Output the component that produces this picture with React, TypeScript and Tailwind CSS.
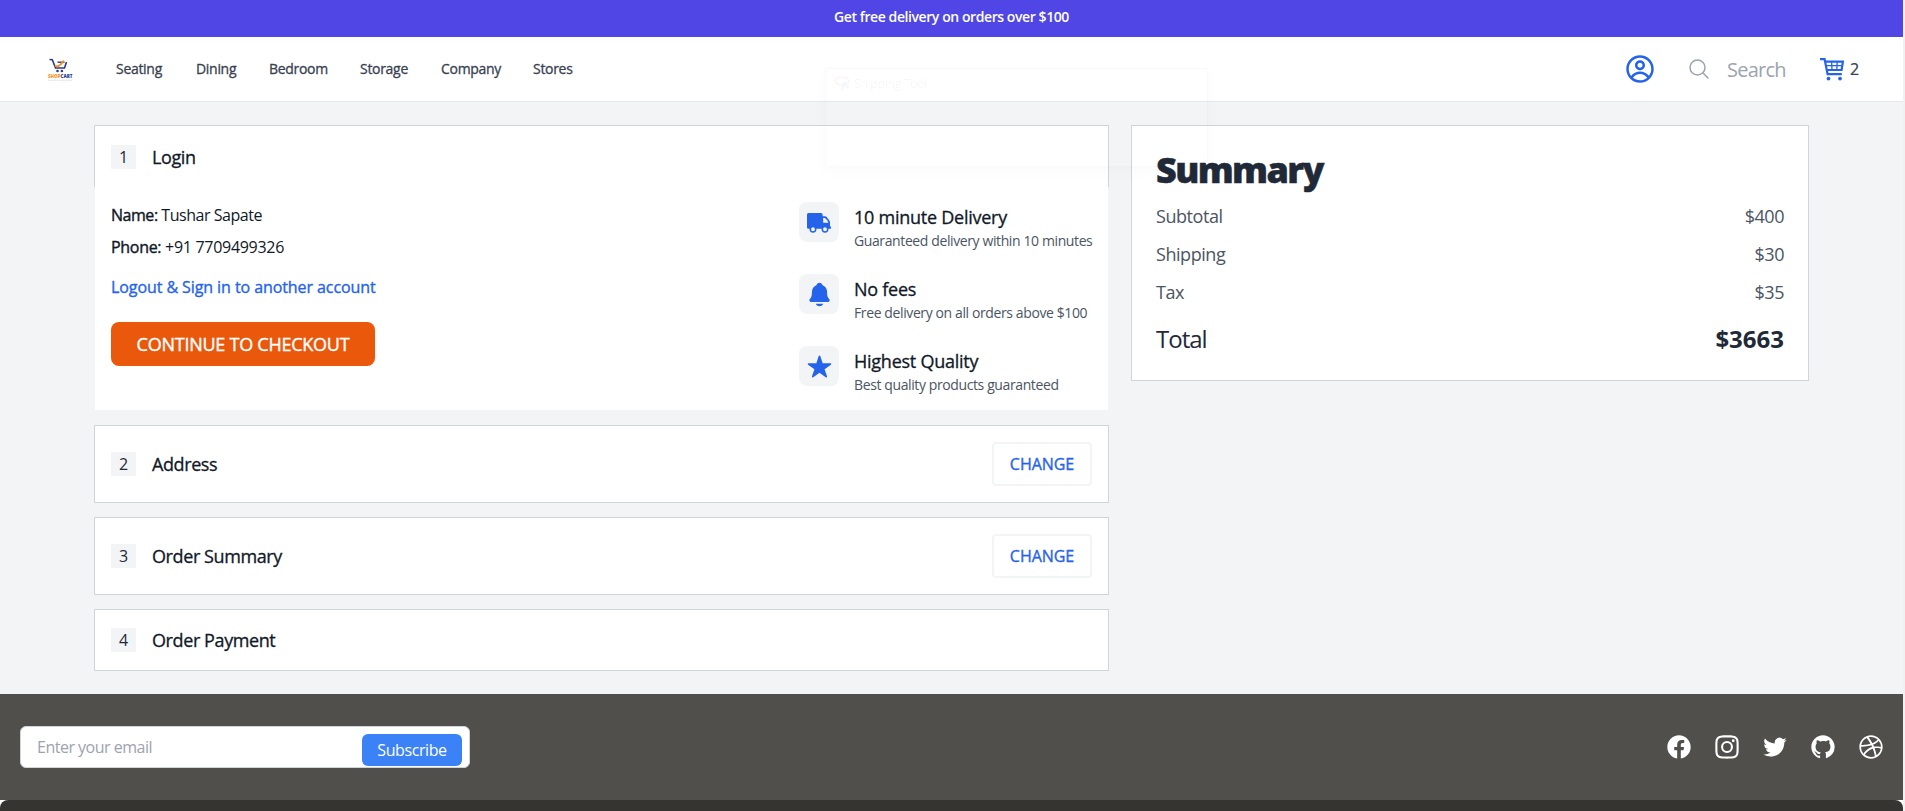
import { CgProfile } from "react-icons/cg";
import { HiOutlineMagnifyingGlass } from "react-icons/hi2";
import { IoNotifications } from "react-icons/io5";
import { IoIosStar } from "react-icons/io";

const links = [
    { name: "Seating", style: "w-[48px]" },
    { name: "Dining", style: "w-[41px]" },
    { name: "Bedroom", style: "w-[59px]" },
    { name: "Storage", style: "w-[49px]" },
    { name: "Company", style: "w-[60px]" },
    { name: "Stores", style: "w-[40px]" },
];

function Logo() {
    return (
        <svg className="h-[26px] w-[28px] overflow-visible" viewBox="0 0 28 26">
            <path d="M3.5 3.5 L6.3 3.8 L9.5 12 L18.5 12 L20.5 6" fill="none" stroke="#2b3a8c" strokeWidth="1.6" />
            <path d="M11.5 6.2 L18.5 6.2" stroke="#2b3a8c" strokeWidth="1.4" />
            <path d="M8.8 9.5 C12 11.5 15 9 17.8 4.5" fill="none" stroke="#f7931e" strokeWidth="1.9" />
            <circle cx="11.5" cy="15" r="1.3" fill="#2b3a8c" />
            <circle cx="15.9" cy="15" r="1.3" fill="#2b3a8c" />
            <text x="2" y="22" fontSize="5" fontWeight="800" textLength="24.5" lengthAdjust="spacingAndGlyphs">
                <tspan fill="#f7931e">SHOP</tspan><tspan fill="#2b3a8c">CART</tspan>
            </text>
            <path d="M2.5 24.2 H26" stroke="#d9d9df" strokeWidth="0.9" strokeDasharray="2 0.7" />
        </svg>
    );
}

function CartIcon() {
    return (
        <svg className="ml-[33px] h-[23px] w-[24px]" viewBox="0 0 24 23" fill="none" stroke="#2563eb">
            <path d="M0 1.2 H4.6 L7.6 16.2 H21.8" strokeWidth="2.2" />
            <path d="M5 3.6 H22.9 L21.6 12 H7" strokeWidth="2.2" />
            <path d="M6.2 7.7 H22 M11.6 3.5 L12 12 M17.2 3.5 L16.8 12" strokeWidth="1.3" />
            <circle cx="8.5" cy="20.6" r="1.9" fill="#2563eb" stroke="none" />
            <circle cx="20" cy="20.6" r="1.9" fill="#2563eb" stroke="none" />
        </svg>
    );
}

function TruckIcon() {
    return (
        <svg className="mt-px h-5 w-6" viewBox="0 0 24 20">
            <path d="M1.5 0 H14 Q15.6 0 15.6 1.6 V3.2 H18 Q19 3.2 19.7 4 L22.3 7.4 Q23 8.3 23 9.5 V13.5 H24 V15.8 H1.5 Q0 15.8 0 14.3 V1.5 Q0 0 1.5 0 Z" fill="#2563eb" />
            <path d="M16.2 4.9 H17.8 Q20.6 6.2 21.4 9.8 H16.2 Z" fill="#f3f4f6" />
            <circle cx="6" cy="16.2" r="2.7" fill="#f3f4f6" stroke="#2563eb" strokeWidth="1.5" />
            <circle cx="18" cy="16.2" r="2.7" fill="#f3f4f6" stroke="#2563eb" strokeWidth="1.5" />
        </svg>
    );
}

function Navbar() {
    return (
        <header>
            <div className="flex h-[37px] items-start justify-center bg-[#4f46e5] pt-[7px]">
                <p className="text-sm font-semibold tracking-[-0.42px] text-white">Get free delivery on orders over $100</p>
            </div>
            <nav className="flex h-[65px] items-center border-b border-[#e5e7eb] bg-white pl-[46px] pr-[44px]">
                <Logo />
                <div className="ml-[42px] flex gap-8">
                    {links.map((link) => (
                        <a key={link.name} className={`${link.style} whitespace-nowrap text-sm font-medium tracking-[-0.3px] text-[#374151] [-webkit-text-stroke:0.3px]`}>{link.name}</a>
                    ))}
                </div>
                <div className="ml-auto flex items-center">
                    <CgProfile className="h-[30px] w-[30px] text-[#2563eb]" />
                    <HiOutlineMagnifyingGlass className="ml-8 h-6 w-6 text-[#9ca3af]" />
                    <span className="ml-[16px] w-[60px] pt-px text-xl tracking-[-0.75px] text-[#9ca3af]">Search</span>
                    <CartIcon />
                    <span className="ml-[6px] w-[9px] text-base font-medium text-[#374151] [-webkit-text-stroke:0.2px]">2</span>
                </div>
            </nav>
        </header>
    );
}

function StepTitle({ step, title }: { step: number; title: string }) {
    return (
        <div className="flex items-center gap-4">
            <span className="flex h-6 w-[25px] items-center justify-center bg-[#f3f4f6] text-base text-[#1f2937]">{step}</span>
            <h2 className="text-lg font-medium tracking-[-0.4px] text-[#111827] [-webkit-text-stroke:0.3px]">{title}</h2>
        </div>
    );
}

function ChangeButton() {
    return (
        <button className="h-11 w-[100px] rounded border-2 border-[#f3f4f6] text-base font-medium tracking-[-0.05px] text-[#2563eb] [-webkit-text-stroke:0.35px]">CHANGE</button>
    );
}

function Feature({ icon, title, text }: { icon: React.ReactNode; title: string; text: string }) {
    return (
        <div className="flex gap-[15px]">
            <div className="flex h-10 w-10 items-center justify-center rounded-lg bg-[#f3f4f6] text-[#2563eb]">{icon}</div>
            <div className="w-[238px] whitespace-nowrap pt-px">
                <h3 className="text-lg leading-7 font-medium tracking-[-0.25px] text-[#111827] [-webkit-text-stroke:0.3px]">{title}</h3>
                <p className="text-sm leading-5 tracking-[-0.39px] text-[#4b5563]">{text}</p>
            </div>
        </div>
    );
}

function Login() {
    return (
        <section>
            <div className="flex h-[62px] items-center border border-b-0 border-[#d1d5db] bg-white px-4">
                <StepTitle step={1} title="Login" />
            </div>
            <div className="mx-px flex h-[223px] justify-between bg-white pl-4 pr-4 pt-[15px]">
                <div className="pt-px text-base text-[#111827]">
                    <p className="tracking-[-0.46px]"><span className="font-medium [-webkit-text-stroke:0.4px]">Name:</span> Tushar Sapate</p>
                    <p className="mt-2 tracking-[-0.3px]"><span className="font-medium [-webkit-text-stroke:0.4px]">Phone:</span> +91 7709499326</p>
                    <p className="mt-4 font-medium tracking-[-0.08px] text-[#2563eb] [-webkit-text-stroke:0.35px]">Logout &amp; Sign in to another account</p>
                    <button className="mt-[23px] h-11 w-[264px] rounded-lg bg-[#ea580c] text-lg font-medium tracking-[-0.25px] text-white [-webkit-text-stroke:0.4px]">CONTINUE TO CHECKOUT</button>
                </div>
                <div className="flex flex-col gap-[23px]">
                    <Feature icon={<TruckIcon />} title="10 minute Delivery" text="Guaranteed delivery within 10 minutes" />
                    <Feature icon={<IoNotifications className="h-[27px] w-[27px]" />} title="No fees" text="Free delivery on all orders above $100" />
                    <Feature icon={<IoIosStar className="h-[27px] w-[27px]" />} title="Highest Quality" text="Best quality products guaranteed" />
                </div>
            </div>
        </section>
    );
}

function SummaryRow({ label, price }: { label: string; price: string }) {
    return (
        <div className="flex justify-between text-lg leading-[28px] tracking-[-0.45px] text-[#4b5563]">
            <span>{label}</span>
            <span>{price}</span>
        </div>
    );
}

function Summary() {
    return (
        <aside className="h-[256px] w-[678px] border border-[#d1d5db] bg-white px-6 pt-6">
            <h1 className="text-4xl leading-10 font-extrabold tracking-[-1.6px] text-[#1f2937] [-webkit-text-stroke:0.5px]">Summary</h1>
            <div className="mt-[12px] flex flex-col gap-[10px]">
                <SummaryRow label="Subtotal" price="$400" />
                <SummaryRow label="Shipping" price="$30" />
                <SummaryRow label="Tax" price="$35" />
            </div>
            <div className="mt-[17px] flex justify-between text-2xl leading-8 text-[#1f2937]">
                <span className="tracking-[-1px]">Total</span>
                <span className="font-bold">$3663</span>
            </div>
        </aside>
    );
}

const socials = [
    "M22 12c0-5.523-4.477-10-10-10S2 6.477 2 12c0 4.991 3.657 9.128 8.438 9.878v-6.987h-2.54V12h2.54V9.797c0-2.506 1.492-3.89 3.777-3.89 1.094 0 2.238.195 2.238.195v2.46h-1.26c-1.243 0-1.63.771-1.63 1.562V12h2.773l-.443 2.89h-2.33v6.988C18.343 21.128 22 16.991 22 12z",
    "M12.315 2c2.43 0 2.784.013 3.808.06 1.064.049 1.791.218 2.427.465a4.902 4.902 0 011.772 1.153 4.902 4.902 0 011.153 1.772c.247.636.416 1.363.465 2.427.048 1.067.06 1.407.06 4.123v.08c0 2.643-.012 2.987-.06 4.043-.049 1.064-.218 1.791-.465 2.427a4.902 4.902 0 01-1.153 1.772 4.902 4.902 0 01-1.772 1.153c-.636.247-1.363.416-2.427.465-1.067.048-1.407.06-4.123.06h-.08c-2.643 0-2.987-.012-4.043-.06-1.064-.049-1.791-.218-2.427-.465a4.902 4.902 0 01-1.772-1.153 4.902 4.902 0 01-1.153-1.772c-.247-.636-.416-1.363-.465-2.427-.047-1.024-.06-1.379-.06-3.808v-.63c0-2.43.013-2.784.06-3.808.049-1.064.218-1.791.465-2.427a4.902 4.902 0 011.153-1.772A4.902 4.902 0 015.45 2.525c.636-.247 1.363-.416 2.427-.465C8.901 2.013 9.256 2 11.685 2h.63zm-.081 1.802h-.468c-2.456 0-2.784.011-3.807.058-.975.045-1.504.207-1.857.344-.467.182-.8.398-1.15.748-.35.35-.566.683-.748 1.15-.137.353-.3.882-.344 1.857-.047 1.023-.058 1.351-.058 3.807v.468c0 2.456.011 2.784.058 3.807.045.975.207 1.504.344 1.857.182.466.399.8.748 1.15.35.35.683.566 1.15.748.353.137.882.3 1.857.344 1.054.048 1.37.058 4.041.058h.08c2.597 0 2.917-.01 3.96-.058.976-.045 1.505-.207 1.858-.344.466-.182.8-.398 1.15-.748.35-.35.566-.683.748-1.15.137-.353.3-.882.344-1.857.048-1.055.058-1.37.058-4.041v-.08c0-2.597-.01-2.917-.058-3.96-.045-.976-.207-1.505-.344-1.858a3.097 3.097 0 00-.748-1.15 3.098 3.098 0 00-1.15-.748c-.353-.137-.882-.3-1.857-.344-1.023-.047-1.351-.058-3.807-.058zM12 6.865a5.135 5.135 0 110 10.27 5.135 5.135 0 010-10.27zm0 1.802a3.333 3.333 0 100 6.666 3.333 3.333 0 000-6.666zm5.338-3.205a1.2 1.2 0 110 2.4 1.2 1.2 0 010-2.4z",
    "M8.29 20.251c7.547 0 11.675-6.253 11.675-11.675 0-.178 0-.355-.012-.53A8.348 8.348 0 0022 5.92a8.19 8.19 0 01-2.357.646 4.118 4.118 0 001.804-2.27 8.224 8.224 0 01-2.605.996 4.107 4.107 0 00-6.993 3.743 11.65 11.65 0 01-8.457-4.287 4.106 4.106 0 001.27 5.477A4.072 4.072 0 012.8 9.713v.052a4.105 4.105 0 003.292 4.022 4.095 4.095 0 01-1.853.07 4.108 4.108 0 003.834 2.85A8.233 8.233 0 012 18.407a11.616 11.616 0 006.29 1.84",
    "M12 2C6.477 2 2 6.484 2 12.017c0 4.425 2.865 8.18 6.839 9.504.5.092.682-.217.682-.483 0-.237-.008-.868-.013-1.703-2.782.605-3.369-1.343-3.369-1.343-.454-1.158-1.11-1.466-1.11-1.466-.908-.62.069-.608.069-.608 1.003.07 1.531 1.032 1.531 1.032.892 1.53 2.341 1.088 2.91.832.092-.647.35-1.088.636-1.338-2.22-.253-4.555-1.113-4.555-4.951 0-1.093.39-1.988 1.029-2.688-.103-.253-.446-1.272.098-2.65 0 0 .84-.27 2.75 1.026A9.564 9.564 0 0112 6.844c.85.004 1.705.115 2.504.337 1.909-1.296 2.747-1.027 2.747-1.027.546 1.379.202 2.398.1 2.651.64.7 1.028 1.595 1.028 2.688 0 3.848-2.339 4.695-4.566 4.943.359.309.678.92.678 1.855 0 1.338-.012 2.419-.012 2.747 0 .268.18.58.688.482A10.019 10.019 0 0022 12.017C22 6.484 17.522 2 12 2z",
    "M12 2C6.48 2 2 6.48 2 12s4.48 10 10 10c5.51 0 10-4.48 10-10S17.51 2 12 2zm6.605 4.61a8.502 8.502 0 011.93 5.314c-.281-.054-3.101-.629-5.943-.271-.065-.141-.12-.293-.184-.445a25.416 25.416 0 00-.564-1.236c3.145-1.28 4.577-3.124 4.761-3.362zM12 3.475c2.17 0 4.154.813 5.662 2.148-.152.216-1.443 1.941-4.48 3.08-1.399-2.57-2.95-4.675-3.189-5A8.687 8.687 0 0112 3.475zm-3.633.803a53.896 53.896 0 013.167 4.935c-3.992 1.063-7.517 1.04-7.896 1.04a8.581 8.581 0 014.729-5.975zM3.453 12.01v-.26c.37.01 4.512.065 8.775-1.215.25.477.477.965.694 1.453-.109.033-.228.065-.336.098-4.404 1.42-6.747 5.303-6.942 5.629a8.522 8.522 0 01-2.19-5.705zM12 20.547a8.482 8.482 0 01-5.239-1.8c.152-.315 1.888-3.656 6.703-5.337.022-.01.033-.01.054-.022a35.318 35.318 0 011.823 6.475 8.4 8.4 0 01-3.341.684zm4.761-1.465c-.086-.52-.542-3.015-1.659-6.084 2.679-.423 5.022.271 5.314.369a8.468 8.468 0 01-3.655 5.715z",
];

function Footer() {
    return (
        <footer className="bg-white">
            <div className="flex h-[106px] items-center justify-between bg-[#504f4c] pl-5 pr-[18px]">
                <div className="flex h-[42px] w-[450px] items-start justify-between rounded-md border border-[#d1d5db] bg-white pl-4 pr-[7px]">
                    <input className="mt-[8px] w-[300px] text-base leading-6 tracking-[-0.5px] outline-none placeholder:text-[#9ca3af]" placeholder="Enter your email" />
                    <button className="mt-[7px] h-8 w-[100px] rounded-md bg-[#3b82f6] text-base tracking-[-0.4px] text-white">Subscribe</button>
                </div>
                <div className="flex gap-[20px]">
                    {socials.map((d) => (
                        <svg key={d} className="h-7 w-7" viewBox="0 0 24 24" fill="white">
                            <path fillRule="evenodd" clipRule="evenodd" d={d} />
                        </svg>
                    ))}
                </div>
            </div>
            <div className="h-[11px] rounded-t-lg bg-[#363430]"></div>
        </footer>
    );
}

// Window that is fading out on top of the page
function FadingWindow() {
    return (
        <div className="absolute left-[825px] top-[68px] flex h-[99px] w-[383px] items-start border border-black/[0.02] px-[8px] pt-[6px] shadow-[0_4px_14px_rgba(0,0,0,0.025)]">
            <svg className="mt-[1px] h-[16px] w-[16px] opacity-[0.05]" viewBox="0 0 16 16" fill="none">
                <ellipse cx="8" cy="5" rx="7" ry="4" stroke="#e02020" strokeWidth="1.2" />
                <path d="M10 6 L8 14 M10 6 L14 12" stroke="#2080e0" strokeWidth="2" />
            </svg>
            <span className="ml-[4px] text-xs leading-[18px] tracking-[-0.2px] text-black/[0.05]">Snipping Tool</span>
        </div>
    );
}

function App() {
    return (
        <div className="h-[811px] w-full overflow-hidden bg-[#f1f1f1] pr-[2px] font-['Open_Sans','Noto_Sans',sans-serif]">
            <Navbar />

            {/* Checkout */}

            <main className="flex h-[592px] items-start gap-[22px] bg-[#f3f4f6] pl-[94px] pt-[23px]">
                <div className="flex w-[1015px] flex-col">
                    <Login />
                    <section className="mt-[15px] flex h-[78px] items-center justify-between border border-[#d1d5db] bg-white px-4">
                        <StepTitle step={2} title="Address" />
                        <ChangeButton />
                    </section>
                    <section className="mt-[14px] flex h-[78px] items-center justify-between border border-[#d1d5db] bg-white px-4">
                        <StepTitle step={3} title="Order Summary" />
                        <ChangeButton />
                    </section>
                    <section className="mt-[14px] flex h-[62px] items-center border border-[#d1d5db] bg-white px-4">
                        <StepTitle step={4} title="Order Payment" />
                    </section>
                </div>
                <Summary />
            </main>

            {/* Newsletter and socials */}

            <Footer />
            <FadingWindow />
        </div>
    );
}

export default App;
